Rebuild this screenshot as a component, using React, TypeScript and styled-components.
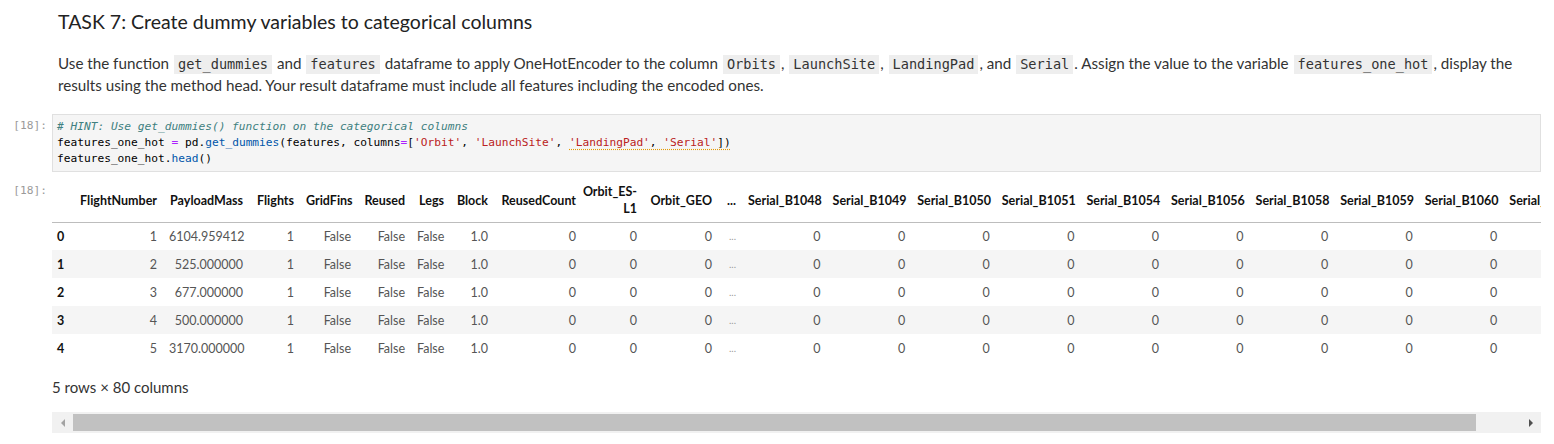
import styled, { createGlobalStyle } from 'styled-components';

const GlobalStyle = createGlobalStyle`
  body {
    margin: 0;
    background: #ffffff;
    font-family: 'Lato', 'Liberation Sans', sans-serif;
    color: #333333;
  }
`;

const MONO = `'DejaVu Sans Mono', 'Liberation Mono', monospace`;

type Column = { label: string; width: number; tight?: boolean };

const SERIALS = ['B1048', 'B1049', 'B1050', 'B1051', 'B1054', 'B1056', 'B1058', 'B1059', 'B1060', 'B1062'];

const COLUMNS: Column[] = [
  { label: 'FlightNumber', width: 92 },
  { label: 'PayloadMass', width: 86 },
  { label: 'Flights', width: 51 },
  { label: 'GridFins', width: 57 },
  { label: 'Reused', width: 54 },
  { label: 'Legs', width: 39 },
  { label: 'Block', width: 44 },
  { label: 'ReusedCount', width: 88 },
  { label: 'Orbit_ES-\nL1', width: 61, tight: true },
  { label: 'Orbit_GEO', width: 75 },
  { label: '...', width: 24 },
  ...SERIALS.map((s) => ({ label: `Serial_${s}`, width: 84.6 })),
];

const PAYLOADS = ['6104.959412', '525.000000', '677.000000', '500.000000', '3170.000000'];

const ROWS = PAYLOADS.map((mass, i) => [
  String(i + 1),
  mass,
  '1',
  'False',
  'False',
  'False',
  '1.0',
  '0',
  '0',
  '0',
  '...',
  ...SERIALS.map(() => '0'),
]);

const INDEX_WIDTH = 19;
const TABLE_WIDTH = COLUMNS.reduce((sum, c) => sum + c.width, INDEX_WIDTH);
const THUMB_RATIO = 0.9696;

export default function App() {
  return (
    <>
      <GlobalStyle />
      <Notebook>
        <Cell>
          <Prompt />
          <Markdown>
            <Title>TASK 7: Create dummy variables to categorical columns</Title>
            <Paragraph>
              Use the function <InlineCode>get_dummies</InlineCode> and <InlineCode>features</InlineCode> dataframe
              to apply OneHotEncoder to the column <InlineCode>Orbits</InlineCode>, <InlineCode>LaunchSite</InlineCode>,{' '}
              <InlineCode>LandingPad</InlineCode>, and <InlineCode>Serial</InlineCode>. Assign the value to the variable{' '}
              <InlineCode>features_one_hot</InlineCode>, display the results using the method head. Your result
              dataframe must include all features including the encoded ones.
            </Paragraph>
          </Markdown>
        </Cell>

        <Cell $gap={18}>
          <Prompt>[18]:</Prompt>
          <CodeBox>
            <CodeLine>
              <Comment># HINT: Use get_dummies() function on the categorical columns</Comment>
            </CodeLine>
            <CodeLine>
              features_one_hot <Op>=</Op> pd.<Prop>get_dummies</Prop>(features, columns<Op>=</Op>[
              <Str>'Orbit'</Str>, <Str>'LaunchSite'</Str>,{' '}
              <Squiggle>
                <Str>'LandingPad'</Str>, <Str>'Serial'</Str>])
              </Squiggle>
            </CodeLine>
            <CodeLine>
              features_one_hot.<Prop>head</Prop>()
            </CodeLine>
          </CodeBox>
        </Cell>

        <Cell $gap={7}>
          <Prompt>[18]:</Prompt>
          <Output>
            <TableScroll>
              <Frame $width={TABLE_WIDTH}>
                <colgroup>
                  <col style={{ width: INDEX_WIDTH }} />
                  {COLUMNS.map((c) => (
                    <col key={c.label} style={{ width: c.width }} />
                  ))}
                </colgroup>
                <thead>
                  <tr>
                    <HeadCell />
                    {COLUMNS.map((c) => (
                      <HeadCell key={c.label} $tight={c.tight}>
                        {c.label}
                      </HeadCell>
                    ))}
                  </tr>
                </thead>
                <tbody>
                  {ROWS.map((row, i) => (
                    <BodyRow key={i} $striped={i % 2 === 1}>
                      <IndexCell>{i}</IndexCell>
                      {row.map((v, j) => (
                        <DataCell key={j} $muted={v === '...'}>
                          {v}
                        </DataCell>
                      ))}
                    </BodyRow>
                  ))}
                </tbody>
              </Frame>
            </TableScroll>
            <Summary>5 rows × 80 columns</Summary>
            <Scrollbar>
              <ArrowButton>
                <Arrow $dir="left" />
              </ArrowButton>
              <Rail>
                <Thumb style={{ width: `${THUMB_RATIO * 100}%` }} />
              </Rail>
              <ArrowButton>
                <Arrow $dir="right" />
              </ArrowButton>
            </Scrollbar>
          </Output>
        </Cell>
      </Notebook>
    </>
  );
}

const Notebook = styled.div`
  padding: 9px 13px 0 0;
`;

const Cell = styled.div<{ $gap?: number }>`
  display: flex;
  margin-top: ${(p) => p.$gap ?? 0}px;
`;

const Prompt = styled.div`
  flex: 0 0 52px;
  box-sizing: border-box;
  padding-right: 5px;
  text-align: right;
  font-family: ${MONO};
  font-size: 11.2px;
  line-height: 16px;
  color: #9a9a9a;
  padding-top: 4px;
`;

const Markdown = styled.div`
  flex: 1;
  padding: 0 22px 0 6px;
`;

const Title = styled.h3`
  margin: 0 0 17px;
  font-size: 19.5px;
  line-height: 26px;
  font-weight: 400;
  color: #222222;
`;

const Paragraph = styled.p`
  margin: 0;
  font-size: 15.2px;
  line-height: 22px;
  color: #333333;
`;

const InlineCode = styled.code`
  display: inline-block;
  margin: 0 1px;
  font-family: ${MONO};
  font-size: 13.6px;
  line-height: 19px;
  background: #eeeeee;
  padding: 0 4px;
`;

const CodeBox = styled.div`
  flex: 1;
  border: 1px solid #e0e0e0;
  background: #f5f5f5;
  padding: 4px 4px;
  font-family: ${MONO};
  font-size: 11.2px;
  line-height: 16px;
  color: #000000;
`;

const CodeLine = styled.div`
  white-space: pre;
`;

const Comment = styled.span`
  color: #408080;
  font-style: italic;
`;

const Op = styled.span`
  color: #aa22ff;
`;

const Prop = styled.span`
  color: #0055aa;
`;

const Str = styled.span`
  color: #ba2121;
`;

const Squiggle = styled.span`
  text-decoration: underline dotted #e69a00;
  text-underline-offset: 3px;
`;

const Output = styled.div`
  flex: 1;
  min-width: 0;
`;

const TableScroll = styled.div`
  overflow: hidden;
`;

const Frame = styled.table<{ $width: number }>`
  table-layout: fixed;
  border-collapse: collapse;
  border-spacing: 0;
  font-size: 12.5px;
  width: ${(p) => p.$width}px;
`;

const HeadCell = styled.th<{ $tight?: boolean }>`
  height: 43px;
  padding: ${(p) => (p.$tight ? '0 6px 0 0' : '0 6px')};
  box-sizing: border-box;
  text-align: right;
  vertical-align: middle;
  white-space: pre;
  font-size: 12.5px;
  line-height: 17px;
  font-weight: 700;
  color: #111111;
  border-bottom: 1px solid #bdbdbd;
`;

const BodyRow = styled.tr<{ $striped: boolean }>`
  height: 28px;
  background: ${(p) => (p.$striped ? '#f5f5f5' : '#ffffff')};
`;

const IndexCell = styled.th`
  padding: 0 0 0 5px;
  text-align: left;
  font-weight: 700;
  color: #111111;
  font-size: 12.5px;
`;

const DataCell = styled.td<{ $muted: boolean }>`
  padding: 0 6px;
  text-align: right;
  white-space: nowrap;
  color: ${(p) => (p.$muted ? '#9a9a9a' : '#555555')};
  font-size: ${(p) => (p.$muted ? '10px' : '12.5px')};
`;

const Summary = styled.div`
  margin-top: 14px;
  font-size: 15px;
  line-height: 22px;
  color: #333333;
`;

const Scrollbar = styled.div`
  margin-top: 14px;
  display: flex;
  align-items: center;
  height: 21px;
  background: #f1f1f1;
`;

const ArrowButton = styled.div`
  flex: 0 0 21px;
  height: 100%;
  display: flex;
  align-items: center;
  justify-content: center;
`;

const Arrow = styled.span<{ $dir: 'left' | 'right' }>`
  width: 0;
  height: 0;
  border-top: 4px solid transparent;
  border-bottom: 4px solid transparent;
  ${(p) =>
    p.$dir === 'left'
      ? 'border-right: 4px solid #a3a3a3;'
      : 'border-left: 4px solid #505050;'}
`;

const Rail = styled.div`
  flex: 1;
  height: 17px;
`;

const Thumb = styled.div`
  height: 100%;
  background: #c1c1c1;
`;
